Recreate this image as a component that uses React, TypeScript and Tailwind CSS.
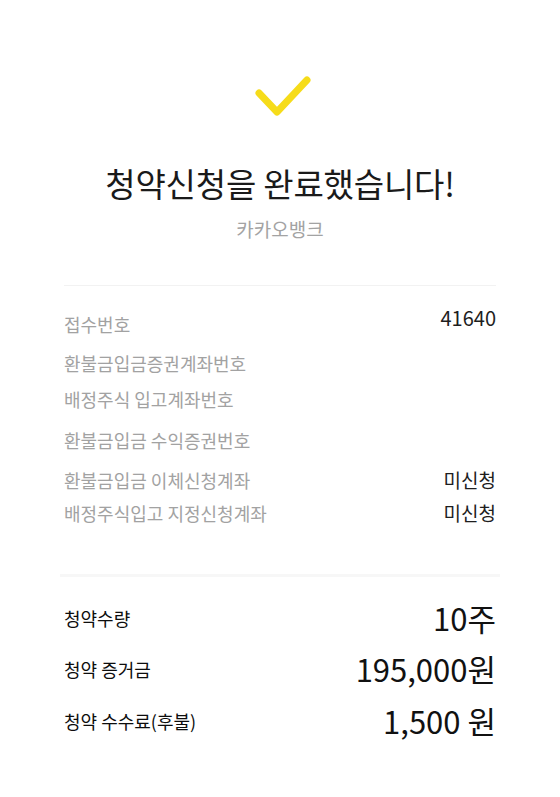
const font = "font-['Noto_Sans_CJK_KR','Noto_Sans',sans-serif]";

const details = [
  { label: "접수번호", value: "41640", gap: "mt-[26px]", valueClass: "text-[20px] mb-[12px]" },
  { label: "환불금입금증권계좌번호", value: "", gap: "mt-[15px]", valueClass: "" },
  { label: "배정주식 입고계좌번호", value: "", gap: "mt-[12px]", valueClass: "" },
  { label: "환불금입금 수익증권번호", value: "", gap: "mt-[17px]", valueClass: "" },
  { label: "환불금입금 이체신청계좌", value: "미신청", gap: "mt-[16px]", valueClass: "text-[19px]" },
  { label: "배정주식입고 지정신청계좌", value: "미신청", gap: "mt-[9px]", valueClass: "text-[19px]" },
];

const summary = [
  { label: "청약수량", value: "10주", gap: "mt-[21px]" },
  { label: "청약 증거금", value: "195,000원", gap: "mt-[11px]" },
  { label: "청약 수수료(후불)", value: "1,500 원", gap: "mt-[12px]" },
];

export default function App() {
  return (
    <div className={`${font} min-h-[797px] w-[560px] bg-white px-16 pt-[72px] text-[#1c1c1c]`}>
      {/* HEADER */}
      <svg className="mx-auto block" width="64" height="48" viewBox="0 0 64 48" fill="none">
        <path
          d="M11 21 L29 40 L59 8"
          stroke="#f6dc1a"
          strokeWidth="7"
          strokeLinecap="round"
          strokeLinejoin="round"
        />
      </svg>

      <h1 className="mt-[42px] text-center text-[33px] leading-[42px] font-normal tracking-[-0.2px] text-[#1a1a1a]">
        청약신청을 완료했습니다!
      </h1>
      <p className="mt-[12px] text-center text-[19px] leading-[26px] text-[#a3a3a3]">
        카카오뱅크
      </p>

      <div className="mt-[43px] h-px bg-[#f2f2f2]" />

      {/* DETAILS */}
      <div className="flex flex-col">
        {details.map((row) => (
          <div key={row.label} className={`${row.gap} flex h-[24px] items-center justify-between`}>
            <span className="text-[18px] leading-[24px] text-[#a2a2a2]">{row.label}</span>
            {row.value && (
              <span className={`${row.valueClass} leading-[24px] text-[#1e1e1e]`}>{row.value}</span>
            )}
          </div>
        ))}
      </div>

      <div className="-mx-1 mt-[49px] h-[3px] bg-[#f7f7f7]" />

      {/* SUMMARY */}
      <div className="flex flex-col">
        {summary.map((row) => (
          <div key={row.label} className={`${row.gap} flex h-[40px] items-center justify-between`}>
            <span className="text-[18px] leading-[24px] font-normal text-[#0d0d0d]">{row.label}</span>
            <span className="text-[31px] leading-[40px] text-[#111]">{row.value}</span>
          </div>
        ))}
      </div>
    </div>
  );
}
